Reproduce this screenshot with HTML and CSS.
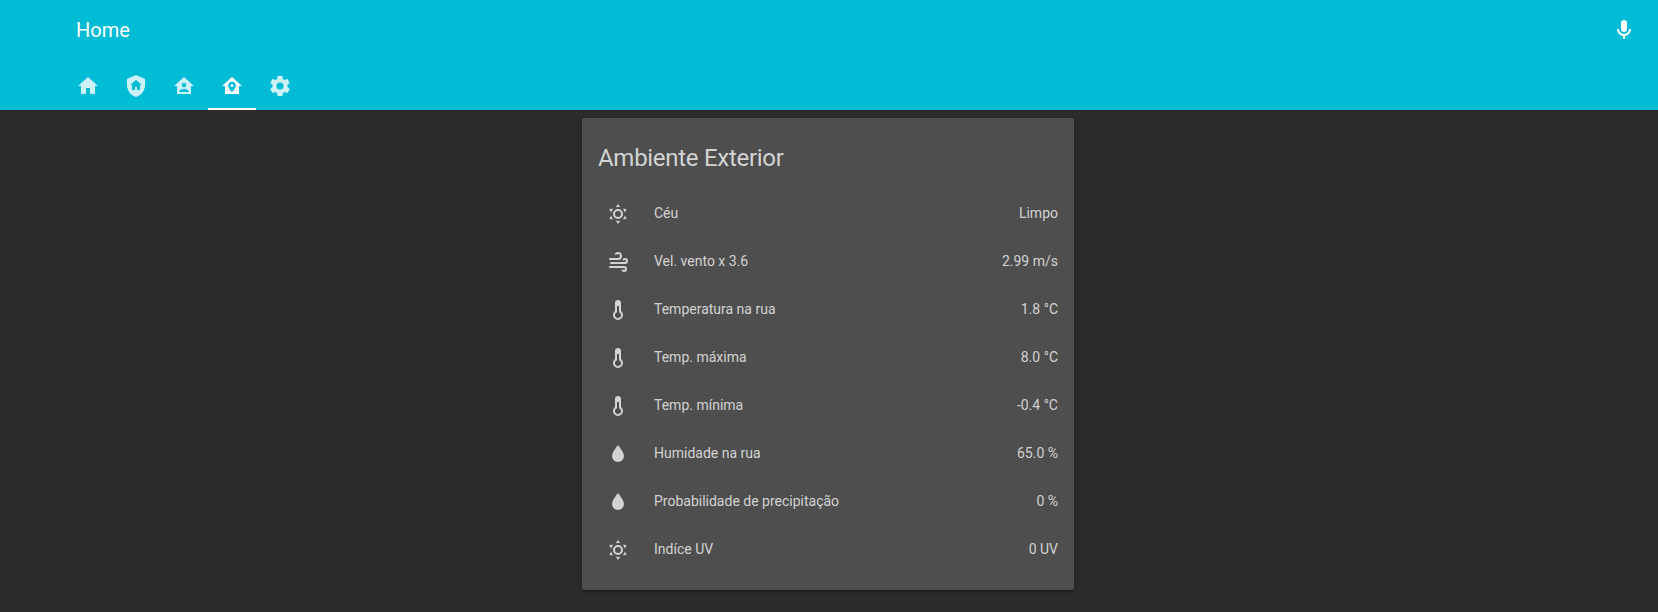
FILE: index.html
```html
<!DOCTYPE html>
<html lang="pt">
<head>
<meta charset="utf-8">
<title>Home</title>
<link rel="stylesheet" href="styles.css">
</head>
<body>
<svg class="symbols" aria-hidden="true">
  <symbol id="sunny" viewBox="0 0 24 24"><path d="M12,7A5,5 0 0,1 17,12A5,5 0 0,1 12,17A5,5 0 0,1 7,12A5,5 0 0,1 12,7M12,9A3,3 0 0,0 9,12A3,3 0 0,0 12,15A3,3 0 0,0 15,12A3,3 0 0,0 12,9M12,2L14.39,5.42C13.65,5.15 12.84,5 12,5C11.16,5 10.35,5.15 9.61,5.42L12,2M3.34,7L7.5,6.65C6.9,7.16 6.36,7.78 5.94,8.5C5.5,9.24 5.25,10 5.11,10.79L3.34,7M3.36,17L5.12,13.23C5.26,14 5.53,14.78 5.95,15.5C6.37,16.24 6.91,16.86 7.5,17.37L3.36,17M20.65,7L18.88,10.79C18.74,10 18.47,9.23 18.05,8.5C17.63,7.78 17.1,7.15 16.5,6.64L20.65,7M20.64,17L16.5,17.36C17.09,16.85 17.62,16.22 18.04,15.5C18.46,14.77 18.73,14 18.87,13.21L20.64,17M12,22L9.59,18.56C10.33,18.83 11.14,19 12,19C12.82,19 13.63,18.83 14.37,18.56L12,22Z"/></symbol>
  <symbol id="windy" viewBox="0 0 24 24"><path d="M4,10A1,1 0 0,1 3,9A1,1 0 0,1 4,8H12A2,2 0 0,0 14,6A2,2 0 0,0 12,4C11.45,4 10.95,4.22 10.59,4.59C10.2,5 9.56,5 9.17,4.59C8.78,4.2 8.78,3.56 9.17,3.17C9.9,2.45 10.9,2 12,2A4,4 0 0,1 16,6A4,4 0 0,1 12,10H4M19,12A1,1 0 0,0 20,11A1,1 0 0,0 19,10C18.72,10 18.47,10.11 18.29,10.29C17.9,10.68 17.27,10.68 16.88,10.29C16.5,9.9 16.5,9.27 16.88,8.88C17.42,8.34 18.17,8 19,8A3,3 0 0,1 22,11A3,3 0 0,1 19,14H5A1,1 0 0,1 4,13A1,1 0 0,1 5,12H19M18,18H4A1,1 0 0,1 3,17A1,1 0 0,1 4,16H18A3,3 0 0,1 21,19A3,3 0 0,1 18,22C17.17,22 16.42,21.66 15.88,21.12C15.5,20.73 15.5,20.1 15.88,19.71C16.27,19.32 16.9,19.32 17.29,19.71C17.47,19.89 17.72,20 18,20A1,1 0 0,0 19,19A1,1 0 0,0 18,18Z"/></symbol>
  <symbol id="thermometer" viewBox="0 0 24 24"><path fill-rule="evenodd" d="M9,13V5A3,3 0 0,1 15,5V13A5,5 0 1,1 9,13M11,8V14.17A3,3 0 1,0 13,14.17V8Z"/></symbol>
  <symbol id="drop" viewBox="0 0 24 24"><path d="M12,20A6,6 0 0,1 6,14C6,10 12,3.25 12,3.25C12,3.25 18,10 18,14A6,6 0 0,1 12,20Z"/></symbol>
</svg>

<header class="header">
  <div class="toolbar">
    <h1 class="title">Home</h1>
    <svg class="icon" viewBox="0 0 24 24"><path d="M12,2A3,3 0 0,1 15,5V11A3,3 0 0,1 12,14A3,3 0 0,1 9,11V5A3,3 0 0,1 12,2M19,11C19,14.53 16.39,17.44 13,17.93V21H11V17.93C7.61,17.44 5,14.53 5,11H7A5,5 0 0,0 12,16A5,5 0 0,0 17,11H19Z"/></svg>
  </div>
  <nav class="tabs">
    <a class="tab"><svg class="icon" viewBox="0 0 24 24"><path d="M10,20V14H14V20H19V12H22L12,3L2,12H5V20H10Z"/></svg></a>
    <a class="tab"><svg class="icon" viewBox="0 0 24 24"><path d="M11,13H13V16H16V11H18L12,6L6,11H8V16H11V13M12,1L21,5V11C21,16.55 17.16,21.74 12,23C6.84,21.74 3,16.55 3,11V5L12,1Z"/></svg></a>
    <a class="tab"><svg class="icon" viewBox="0 0 24 24"><path fill-rule="evenodd" d="M12,3L2,12H5V20H19V12H22L12,3M12,8.75A2.25,2.25 0 0,1 14.25,11A2.25,2.25 0 0,1 12,13.25A2.25,2.25 0 0,1 9.75,11A2.25,2.25 0 0,1 12,8.75M12,15C13.5,15 16.5,15.75 16.5,17.25V18H7.5V17.25C7.5,15.75 10.5,15 12,15Z"/></svg></a>
    <a class="tab tab-active"><svg class="icon" viewBox="0 0 24 24"><path fill-rule="evenodd" d="M12,3L2,12H5V20H19V12H22L12,3M12,7.7C14.1,7.7 15.8,9.4 15.8,11.5C15.8,14.5 12,18 12,18C12,18 8.2,14.5 8.2,11.5C8.2,9.4 9.9,7.7 12,7.7M12,10A1.5,1.5 0 0,0 10.5,11.5A1.5,1.5 0 0,0 12,13A1.5,1.5 0 0,0 13.5,11.5A1.5,1.5 0 0,0 12,10Z"/></svg></a>
    <a class="tab"><svg class="icon" viewBox="0 0 24 24"><path fill-rule="evenodd" d="M12,15.5A3.5,3.5 0 0,1 8.5,12A3.5,3.5 0 0,1 12,8.5A3.5,3.5 0 0,1 15.5,12A3.5,3.5 0 0,1 12,15.5M19.43,12.97C19.47,12.65 19.5,12.33 19.5,12C19.5,11.67 19.47,11.34 19.43,11L21.54,9.37C21.73,9.22 21.78,8.95 21.66,8.73L19.66,5.27C19.54,5.05 19.27,4.96 19.05,5.05L16.56,6.05C16.04,5.66 15.5,5.32 14.87,5.07L14.5,2.42C14.46,2.18 14.25,2 14,2H10C9.75,2 9.54,2.18 9.5,2.42L9.13,5.07C8.5,5.32 7.96,5.66 7.44,6.05L4.95,5.05C4.73,4.96 4.46,5.05 4.34,5.27L2.34,8.73C2.21,8.95 2.27,9.22 2.46,9.37L4.57,11C4.53,11.34 4.5,11.67 4.5,12C4.5,12.33 4.53,12.65 4.57,12.97L2.46,14.63C2.27,14.78 2.21,15.05 2.34,15.27L4.34,18.73C4.46,18.95 4.73,19.03 4.95,18.95L7.44,17.94C7.96,18.34 8.5,18.68 9.13,18.93L9.5,21.58C9.54,21.82 9.75,22 10,22H14C14.25,22 14.46,21.82 14.5,21.58L14.87,18.93C15.5,18.67 16.04,18.34 16.56,17.94L19.05,18.95C19.27,19.03 19.54,18.95 19.66,18.73L21.66,15.27C21.78,15.05 21.73,14.78 21.54,14.63L19.43,12.97Z"/></svg></a>
  </nav>
</header>

<main class="view">
  <section class="card">
    <h2 class="card-title">Ambiente Exterior</h2>
    <div class="rows">
      <div class="row"><svg class="icon"><use href="#sunny"/></svg><span class="name">Céu</span><span class="value">Limpo</span></div>
      <div class="row"><svg class="icon"><use href="#windy"/></svg><span class="name">Vel. vento x 3.6</span><span class="value">2.99 m/s</span></div>
      <div class="row"><svg class="icon"><use href="#thermometer"/></svg><span class="name">Temperatura na rua</span><span class="value">1.8 °C</span></div>
      <div class="row"><svg class="icon"><use href="#thermometer"/></svg><span class="name">Temp. máxima</span><span class="value">8.0 °C</span></div>
      <div class="row"><svg class="icon"><use href="#thermometer"/></svg><span class="name">Temp. mínima</span><span class="value">-0.4 °C</span></div>
      <div class="row"><svg class="icon"><use href="#drop"/></svg><span class="name">Humidade na rua</span><span class="value">65.0 %</span></div>
      <div class="row"><svg class="icon"><use href="#drop"/></svg><span class="name">Probabilidade de precipitação</span><span class="value">0 %</span></div>
      <div class="row"><svg class="icon"><use href="#sunny"/></svg><span class="name">Indíce UV</span><span class="value">0 UV</span></div>
    </div>
  </section>
</main>
</body>
</html>
```
FILE: styles.css
```css
* { box-sizing: border-box; }

body {
  margin: 0;
  height: 100vh;
  overflow: hidden;
  background: #2b2b2b;
  color: #d3d3d3;
  font-family: Roboto, "Noto Sans", sans-serif;
  font-size: 14px;
}

.symbols { display: none; }

.icon {
  display: block;
  flex: none;
  width: 24px;
  height: 24px;
  fill: currentColor;
}

.header {
  height: 110px;
  background: #00bcd4;
  color: #fff;
}

.toolbar {
  display: flex;
  align-items: center;
  justify-content: space-between;
  height: 62px;
  padding: 0 22px 2px 76px;
}

.title {
  margin: 0;
  font-size: 20px;
  font-weight: 400;
  line-height: 24px;
}

.tabs {
  display: flex;
  height: 48px;
  padding-left: 64px;
}

.tab {
  display: flex;
  align-items: center;
  justify-content: center;
  width: 48px;
  border-bottom: 2px solid transparent;
  padding-top: 2px;
}

.tab .icon { opacity: 0.8; }
.tab-active { border-bottom-color: #fff; }
.tab-active .icon { opacity: 1; }

.view {
  display: flex;
  justify-content: center;
  padding: 8px 2px 0 0;
}

.card {
  width: 492px;
  height: 472px;
  border-radius: 2px;
  background: #4e4e4e;
  box-shadow: 0 2px 2px 0 rgba(0, 0, 0, 0.14), 0 1px 5px 0 rgba(0, 0, 0, 0.12), 0 3px 1px -2px rgba(0, 0, 0, 0.2);
}

.card-title {
  margin: 0;
  padding: 24px 16px 16px;
  font-size: 24px;
  font-weight: 400;
  line-height: 32px;
  letter-spacing: -0.288px;
}

.rows {
  display: grid;
  gap: 8px;
  padding: 4px 16px 0;
}

.row {
  display: flex;
  align-items: center;
  height: 40px;
  padding-left: 8px;
  line-height: 20px;
}

.name,
.value {
  padding-bottom: 2px;
}

.name {
  flex: 1;
  margin-left: 24px;
}
```
